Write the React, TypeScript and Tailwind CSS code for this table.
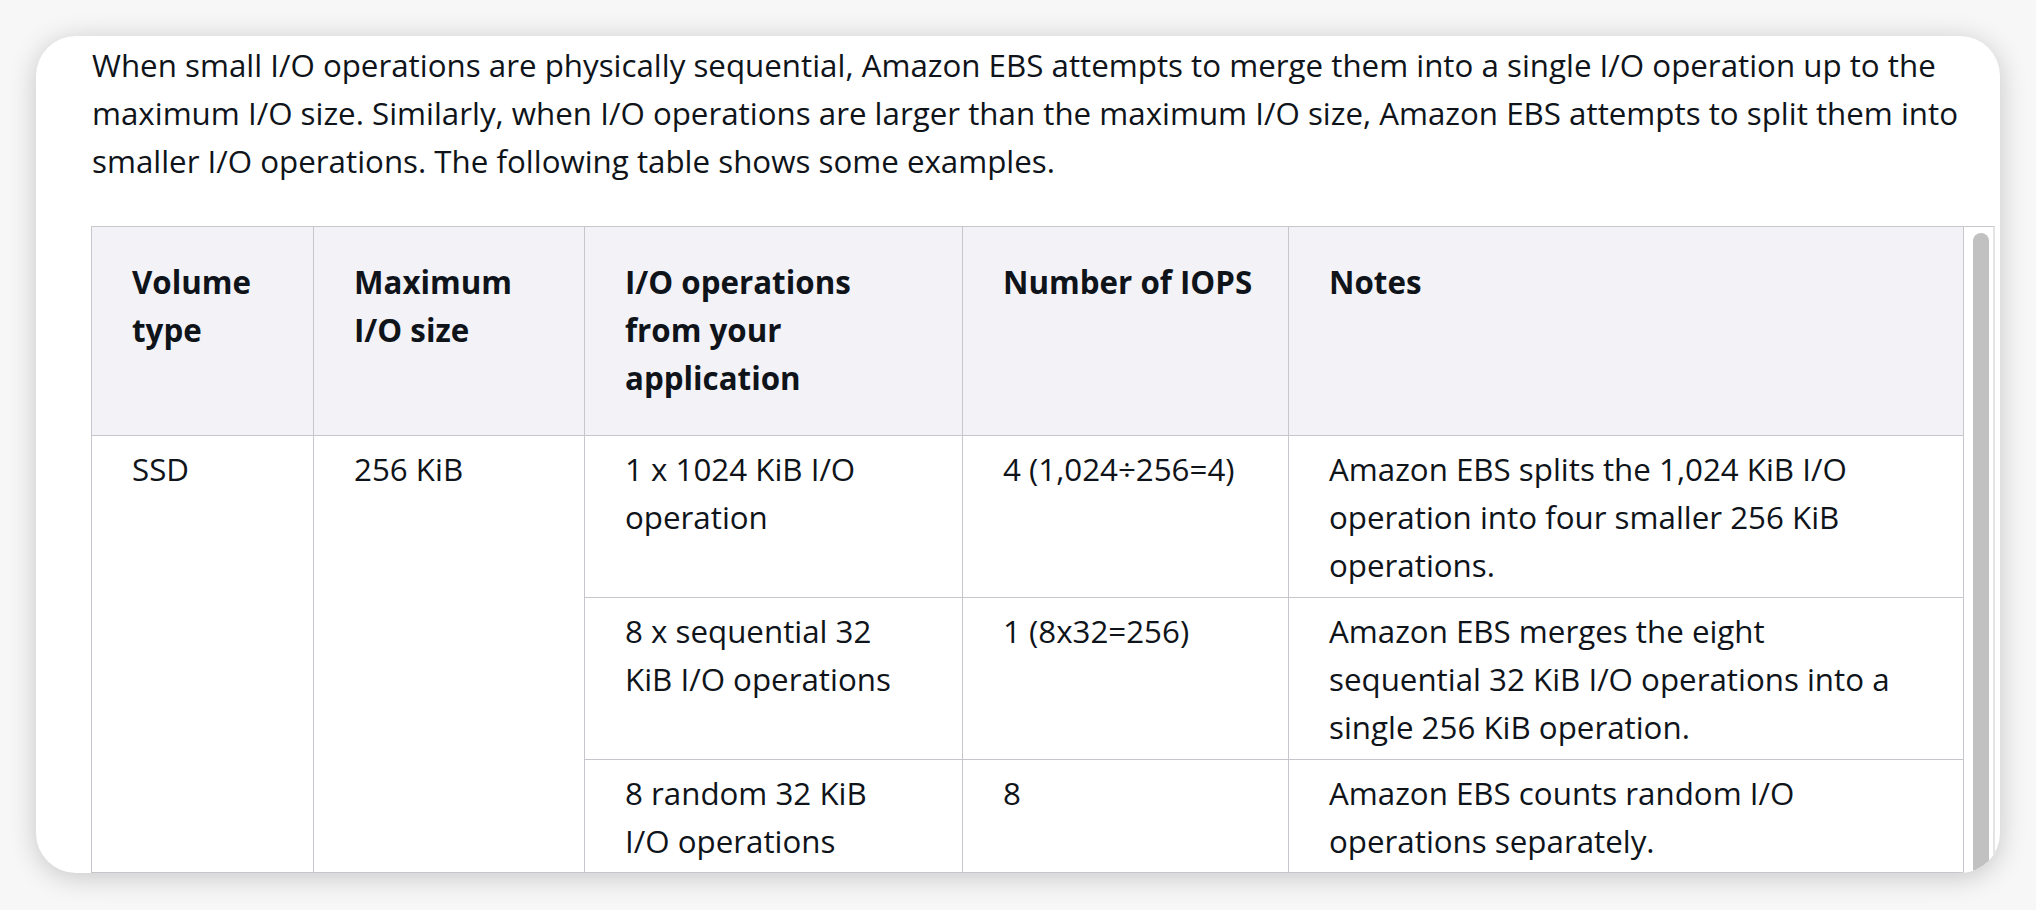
import React from 'react';

type Cell = { lines: string[]; rowSpan?: number };

const headers = [
  ['Volume', 'type'],
  ['Maximum', 'I/O size'],
  ['I/O operations', 'from your', 'application'],
  ['Number of IOPS'],
  ['Notes'],
];

const colWidths = ['w-[222px]', 'w-[271px]', 'w-[378px]', 'w-[326px]', 'w-[675px]'];

// each row lists only the cells it renders (first row carries the rowspans)
const rows: Cell[][] = [
  [
    { lines: ['SSD'], rowSpan: 3 },
    { lines: ['256 KiB'], rowSpan: 3 },
    { lines: ['1 x 1024 KiB I/O', 'operation'] },
    { lines: ['4 (1,024÷256=4)'] },
    { lines: ['Amazon EBS splits the 1,024 KiB I/O', 'operation into four smaller 256 KiB', 'operations.'] },
  ],
  [
    { lines: ['8 x sequential 32', 'KiB I/O operations'] },
    { lines: ['1 (8x32=256)'] },
    { lines: ['Amazon EBS merges the eight', 'sequential 32 KiB I/O operations into a', 'single 256 KiB operation.'] },
  ],
  [
    { lines: ['8 random 32 KiB', 'I/O operations'] },
    { lines: ['8'] },
    { lines: ['Amazon EBS counts random I/O', 'operations separately.'] },
  ],
];

const Lines: React.FC<{ lines: string[] }> = ({ lines }) => (
  <>
    {lines.map((l, i) => (
      <React.Fragment key={i}>
        {i > 0 && <br />}
        {l}
      </React.Fragment>
    ))}
  </>
);

export default function App() {
  return (
    <div
      className="min-h-screen bg-[#f7f7f7] pl-[36px] pt-[36px] text-[#0f141a]"
      style={{ fontFamily: '"Open Sans", "Noto Sans", sans-serif' }}
    >
      <div className="w-[1964px] overflow-hidden rounded-[40px] bg-white pl-[55px] pr-[5px] pt-[5px] shadow-[0_4px_28px_rgba(0,0,0,0.2)]">
        <p className="pl-[1px] text-[31.3px] leading-[48px]">
          When small I/O operations are physically sequential, Amazon EBS attempts to merge them into a single I/O
          operation up to the maximum I/O size. Similarly, when I/O operations are larger than the maximum I/O size,
          Amazon EBS attempts to split them into smaller I/O operations. The following table shows some examples.
        </p>

        <div className="mt-[41px] flex">
          <table className="w-[1872px] table-fixed border-collapse text-left text-[31.3px] leading-[48px]">
            <colgroup>
              {colWidths.map(w => (
                <col key={w} className={w} />
              ))}
            </colgroup>
            <thead>
              <tr className="bg-[#f2f2f7]">
                {headers.map((h, i) => (
                  <th
                    key={i}
                    className="border border-[#c6c6cd] pb-[33px] pl-[40px] pr-[12px] pt-[31px] align-top font-bold whitespace-nowrap"
                  >
                    <Lines lines={h} />
                  </th>
                ))}
              </tr>
            </thead>
            <tbody>
              {rows.map((row, r) => (
                <tr key={r}>
                  {row.map((c, i) => (
                    <td
                      key={i}
                      rowSpan={c.rowSpan}
                      className={`border border-[#c6c6cd] pl-[40px] pr-[12px] pt-[9px] align-top whitespace-nowrap ${
                        r === rows.length - 1 ? 'pb-[7px]' : 'pb-[8px]'
                      }`}
                    >
                      <Lines lines={c.lines} />
                    </td>
                  ))}
                </tr>
              ))}
            </tbody>
          </table>

          {/* scrollbar track */}
          <div className="flex w-[32px] border-r-2 border-t border-r-[#e4e4e4] border-t-[#c6c6cd] bg-white">
            <div className="ml-[9px] mt-[6px] w-[16px] rounded-t-full bg-[#c1c1c1]" />
          </div>
        </div>
      </div>
    </div>
  );
}
